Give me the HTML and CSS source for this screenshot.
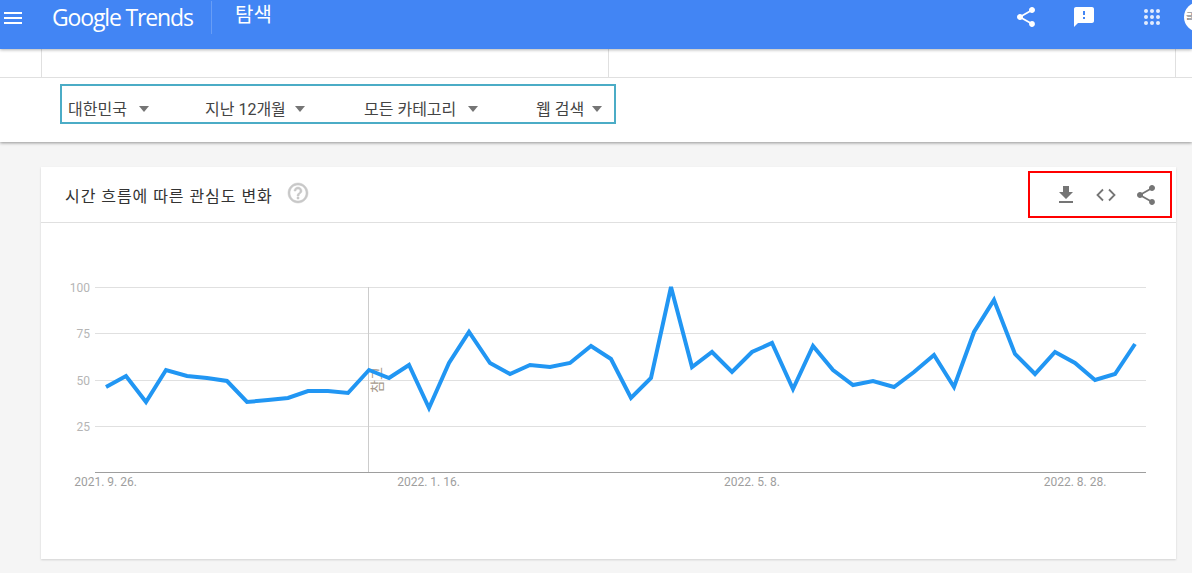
FILE: index.html
```html
<!DOCTYPE html>
<html lang="ko">
<head>
    <meta charset="UTF-8">
    <meta name="viewport" content="width=device-width, initial-scale=1.0">
    <title>Google Trends - 탐색</title>
    <link rel="stylesheet" href="styles.css">
</head>
<body>
    <header class="top-bar">
        <svg class="menu-icon" width="18" height="12" viewBox="0 0 18 12"><path d="M0 0h18v2H0zM0 5h18v2H0zM0 10h18v2H0z" fill="#fff"/></svg>
        <div class="logo">Google Trends</div>
        <div class="top-divider"></div>
        <div class="page-title">탐색</div>
        <div class="top-actions">
            <svg class="top-share" width="24" height="24" viewBox="0 0 24 24"><path fill="#fff" d="M18 16.08c-.76 0-1.44.3-1.96.77L8.91 12.7c.05-.23.09-.46.09-.7s-.04-.47-.09-.7l7.05-4.11c.54.5 1.25.81 2.04.81 1.66 0 3-1.34 3-3s-1.34-3-3-3-3 1.34-3 3c0 .24.04.47.09.7L8.04 9.81C7.5 9.31 6.79 9 6 9c-1.66 0-3 1.34-3 3s1.34 3 3 3c.79 0 1.5-.31 2.04-.81l7.12 4.16c-.05.21-.08.43-.08.65 0 1.61 1.31 2.92 2.92 2.92s2.92-1.31 2.92-2.92-1.31-2.92-2.92-2.92z"/></svg>
            <svg class="top-feedback" width="24" height="24" viewBox="0 0 24 24"><path fill="#fff" d="M20 2H4c-1.1 0-2 .9-2 2v18l4-4h14c1.1 0 2-.9 2-2V4c0-1.1-.9-2-2-2zm-7 12h-2v-2h2v2zm0-4h-2V6h2v4z"/></svg>
            <svg class="top-apps" width="16" height="16" viewBox="0 0 16 16" fill="#fff"><circle cx="2" cy="2" r="2"/><circle cx="8" cy="2" r="2"/><circle cx="14" cy="2" r="2"/><circle cx="2" cy="8" r="2"/><circle cx="8" cy="8" r="2"/><circle cx="14" cy="8" r="2"/><circle cx="2" cy="14" r="2"/><circle cx="8" cy="14" r="2"/><circle cx="14" cy="14" r="2"/></svg>
            <div class="avatar">글</div>
        </div>
    </header>

    <section class="filters">
        <div class="term-row">
            <div class="term-cell term-first"></div>
            <div class="term-cell term-wide"></div>
            <div class="term-cell term-wide"></div>
        </div>
        <div class="filter-row">
            <div class="filter-box">
                <div class="filter filter-geo">대한민국<span class="arrow"></span></div>
                <div class="filter filter-time">지난 12개월<span class="arrow"></span></div>
                <div class="filter filter-cat">모든 카테고리<span class="arrow"></span></div>
                <div class="filter filter-type">웹 검색<span class="arrow"></span></div>
            </div>
        </div>
    </section>

    <main class="content">
        <div class="card">
            <div class="card-header">
                <h2 class="card-title">시간 흐름에 따른 관심도 변화</h2>
                <svg class="help-icon" width="24" height="24" viewBox="0 0 24 24"><path fill="#c8c8c8" stroke="#c8c8c8" stroke-width="0.5" d="M11 18h2v-2h-2v2zm1-16C6.48 2 2 6.48 2 12s4.48 10 10 10 10-4.48 10-10S17.52 2 12 2zm0 18c-4.41 0-8-3.59-8-8s3.59-8 8-8 8 3.59 8 8-3.59 8-8 8zm0-14c-2.21 0-4 1.79-4 4h2c0-1.1.9-2 2-2s2 .9 2 2c0 2-3 1.75-3 5h2c0-2.25 3-2.5 3-5 0-2.21-1.79-4-4-4z"/></svg>
                <div class="card-actions">
                    <svg width="24" height="24" viewBox="0 0 24 24"><path fill="#757575" d="M19 9h-4V3H9v6H5l7 7 7-7zM5 18v2h14v-2H5z"/></svg>
                    <svg width="24" height="24" viewBox="0 0 24 24"><path fill="none" stroke="#757575" stroke-width="1.8" d="M9 6.5 3.5 12 9 17.5M15 6.5l5.5 5.5-5.5 5.5"/></svg>
                    <svg width="24" height="24" viewBox="0 0 24 24"><path fill="#757575" d="M18 16.08c-.76 0-1.44.3-1.96.77L8.91 12.7c.05-.23.09-.46.09-.7s-.04-.47-.09-.7l7.05-4.11c.54.5 1.25.81 2.04.81 1.66 0 3-1.34 3-3s-1.34-3-3-3-3 1.34-3 3c0 .24.04.47.09.7L8.04 9.81C7.5 9.31 6.79 9 6 9c-1.66 0-3 1.34-3 3s1.34 3 3 3c.79 0 1.5-.31 2.04-.81l7.12 4.16c-.05.21-.08.43-.08.65 0 1.61 1.31 2.92 2.92 2.92s2.92-1.31 2.92-2.92-1.31-2.92-2.92-2.92z"/></svg>
                </div>
            </div>
            <svg class="chart" width="1135" height="336" viewBox="41 223 1135 336">
                <g class="grid-lines">
                    <line x1="95" x2="1146" y1="287.5" y2="287.5"/>
                    <line x1="95" x2="1146" y1="333.5" y2="333.5"/>
                    <line x1="95" x2="1146" y1="380.5" y2="380.5"/>
                    <line x1="95" x2="1146" y1="426.5" y2="426.5"/>
                </g>
                <line class="baseline" x1="95" x2="1146" y1="472.5" y2="472.5"/>
                <line class="hover-line" x1="368.5" x2="368.5" y1="287" y2="472"/>
                <g class="y-labels">
                    <text x="90" y="292">100</text>
                    <text x="90" y="338">75</text>
                    <text x="90" y="385">50</text>
                    <text x="90" y="431">25</text>
                </g>
                <g class="x-labels">
                    <text x="105.5" y="486">2021. 9. 26.</text>
                    <text x="428.5" y="486">2022. 1. 16.</text>
                    <text x="752" y="486">2022. 5. 8.</text>
                    <text x="1075" y="486">2022. 8. 28.</text>
                </g>
                <text class="hover-note" transform="translate(382 393) rotate(-90)">참고</text>
                <polyline class="trend" points="106,387 126,376 146,402 166,370 187,376 207,378 227,381 247,402 268,400 288,398 308,391 328,391 348,393 369,370 389,378 409,365 429,408 449,363 469,332 490,363 510,374 530,365 550,367 570,363 591,346 611,359 631,398 651,378 671,287 692,367 712,352 732,372 752,352 772,343 793,389 813,346 833,370 853,385 873,381 894,387 914,372 934,355 954,387 974,332 994,300 1015,354 1035,374 1055,352 1075,363 1095,380 1115,374 1135,344"/>
            </svg>
        </div>
    </main>
</body>
</html>
```

FILE: styles.css
```css
html, body {
    height: 100%;
}

body {
    margin: 0;
    height: 573px;
    overflow: hidden;
    background-color: #f5f5f5;
    font-family: Roboto, "Noto Sans CJK KR", sans-serif;
}

.top-bar {
    position: relative;
    z-index: 2;
    display: flex;
    align-items: flex-start;
    height: 49px;
    background-color: #4285f4;
    box-shadow: 0 1px 3px rgba(0, 0, 0, 0.3);
}

.menu-icon {
    margin: 12px 0 0 4px;
}

.logo {
    margin: 2px 0 0 30px;
    width: 142px;
    font-family: "Open Sans", sans-serif;
    font-size: 23px;
    line-height: 30px;
    letter-spacing: -1.15px;
    color: #fff;
    white-space: nowrap;
}

.top-divider {
    width: 1px;
    height: 33px;
    margin: 1px 0 0 17px;
    background-color: rgba(255, 255, 255, 0.2);
}

.page-title {
    margin: 1px 0 0 23px;
    font-size: 20px;
    line-height: 28px;
    color: #fff;
}

.top-actions {
    display: flex;
    align-items: flex-start;
    margin-left: auto;
    width: 178px;
}

.top-actions svg {
    flex-shrink: 0;
}

.top-share {
    margin: 5px 0 0 0;
}

.top-feedback {
    margin: 5px 0 0 34px;
}

.top-apps {
    margin: 9px 0 0 48px;
    opacity: 0.85;
}

.avatar {
    width: 30px;
    height: 30px;
    margin: 2px 0 0 24px;
    padding-left: 2px;
    box-sizing: border-box;
    flex-shrink: 0;
    border-radius: 50%;
    background-color: #fff;
    color: #666;
    font-size: 8px;
    line-height: 30px;
}

.filters {
    position: relative;
    z-index: 1;
    background-color: #fff;
    box-shadow: 0 1px 3px rgba(0, 0, 0, 0.4);
}

.term-row {
    display: flex;
    height: 28px;
    border-bottom: 1px solid #e0e0e0;
}

.term-cell {
    border-right: 1px solid #e0e0e0;
}

.term-first {
    width: 41px;
}

.term-wide {
    width: 566px;
}

.filter-row {
    height: 64px;
    padding: 6px 0 0 60px;
    box-sizing: border-box;
}

.filter-box {
    display: flex;
    box-sizing: border-box;
    width: 556px;
    height: 40px;
    padding-left: 6px;
    border: 2px solid #4bacc6;
    font-size: 16px;
    color: #444;
}

.filter {
    display: flex;
    align-items: center;
    white-space: nowrap;
    padding-top: 8px;
    box-sizing: border-box;
}

.filter-geo {
    width: 137px;
}

.filter-time {
    width: 159px;
}

.filter-cat {
    width: 172px;
}

.arrow {
    width: 0;
    height: 0;
    margin: 2px 0 0 12px;
    border-left: 5.5px solid transparent;
    border-right: 5.5px solid transparent;
    border-top: 6px solid #757575;
}

.filter-time .arrow {
    margin-left: 9px;
}

.filter-type .arrow {
    margin-left: 8px;
}

.content {
    padding: 25px 16px 0 41px;
}

.card {
    height: 392px;
    background-color: #fff;
    box-shadow: 0 1px 2px rgba(0, 0, 0, 0.15);
}

.card-header {
    display: flex;
    align-items: center;
    box-sizing: border-box;
    height: 56px;
    padding: 0 4px 0 24px;
    border-bottom: 1px solid #e0e0e0;
}

.card-title {
    margin: 0;
    font-size: 16px;
    font-weight: 400;
    letter-spacing: 0.95px;
    color: #333;
}

.help-icon {
    margin: -3px 0 0 13px;
}

.card-actions {
    display: flex;
    align-items: center;
    gap: 16px;
    box-sizing: border-box;
    height: 47px;
    margin: 0 0 0 auto;
    padding: 0 12px 0 24px;
    border: 2px solid #f00;
}

.chart {
    display: block;
}

.grid-lines line {
    stroke: #e0e0e0;
}

.baseline {
    stroke: #9e9e9e;
}

.hover-line {
    stroke: #ccc;
}

.y-labels text {
    font-size: 12px;
    fill: #b5b5b5;
    text-anchor: end;
}

.x-labels text {
    font-size: 12px;
    fill: #9e9e9e;
    text-anchor: middle;
}

.hover-note {
    font-size: 14px;
    fill: #a89a8c;
}

.trend {
    fill: none;
    stroke: #2196f3;
    stroke-width: 4;
}
```
